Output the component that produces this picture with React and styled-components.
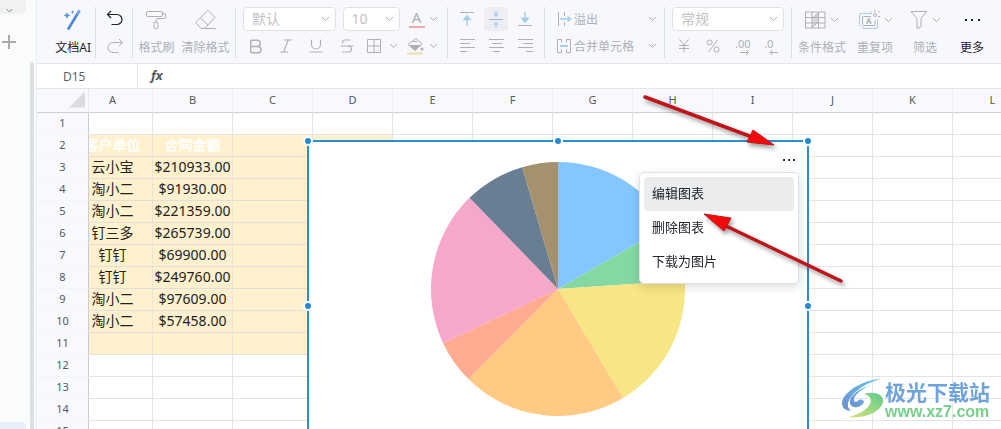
import React, { useLayoutEffect, useRef } from "react";
import styled, { createGlobalStyle, css } from "styled-components";
import { Bold, Italic, Strikethrough, Underline } from "lucide-react";

const GlobalStyle = createGlobalStyle`
    * {
        box-sizing: border-box;
    }

    body {
        margin: 0;
        overflow: hidden;
        background: #fff;
        color: #1f2329;
        font-family: "Noto Sans", "Noto Sans CJK SC", sans-serif;
        font-size: 12px;
    }

    button, input, select {
        margin: 0;
        padding: 0;
        border: 0;
        background: none;
        color: inherit;
        font: inherit;
    }
`;

const Page = styled.div`
    position: relative;
    display: flex;
    height: 100vh;
    overflow: hidden;
`;

// ---------- left rail ----------
const Rail = styled.aside`
    display: flex;
    flex: none;
    width: 37px;
    background: #fafcfb;
    border-right: 1px solid #e9ebf2;
`;

const RailTabs = styled.div`
    display: flex;
    flex: none;
    flex-direction: column;
    justify-content: space-between;
    width: 30px;
`;

const RailTop = styled.div`
    width: 26px;
    height: 14px;
    padding-left: 6px;
    border-radius: 0 0 6px 0;
    background: #f0f2f2;
    color: #8f9294;
`;

const RailAdd = styled.button`
    display: flex;
    width: 18px;
    height: 16px;
    margin-top: 20px;
    color: #a9abac;
`;

const RailActive = styled.div`
    width: 26px;
    height: 7px;
    border-radius: 0 6px 0 0;
    background: #e6eefa;
`;

const RailThumb = styled.div`
    width: 4px;
    margin-top: 62px;
    border-radius: 2px 2px 0 0;
    background: #dcdfe3;
`;

const Main = styled.main`
    display: flex;
    flex: 1;
    flex-direction: column;
    min-width: 0;
`;

// ---------- toolbar ----------
const Toolbar = styled.header`
    display: flex;
    flex: none;
    padding: 7px 0 5px;
    background: #f7f8fe;
    border-bottom: 1px solid #e4e6eb;
    color: #aeb0b5;
    white-space: nowrap;
`;

const Group = styled.div`
    display: flex;
    flex: none;
    flex-direction: ${(props) => (props.$column ? "column" : "row")};
    justify-content: ${(props) => (props.$column ? "space-between" : props.$align || "center")};
    gap: ${(props) => props.$gap || 0}px;
    width: ${(props) => props.$width}px;
    height: 51px;
    padding: 0 ${(props) => (props.$column ? 7 : 4)}px;
    border-right: 1px solid ${(props) => (props.$last ? "transparent" : "#dcdee5")};
`;

const BigButton = styled.button`
    display: flex;
    flex: none;
    flex-direction: column;
    align-items: center;
    justify-content: space-between;
    width: ${(props) => (props.$width ? `${props.$width}px` : "auto")};
    height: 50px;
    padding-top: 1px;
    color: ${(props) => (props.$dark ? "#1f2329" : "inherit")};
    line-height: 18px;
`;

const BigIcon = styled.span`
    display: flex;
    align-items: center;
    gap: 4px;
    height: 24px;
`;

const Row = styled.div`
    display: flex;
    align-items: center;
    justify-content: space-between;
    height: 24px;
`;

const IconButton = styled.button`
    display: flex;
    align-items: center;
    justify-content: center;
    gap: ${(props) => props.$gap || 0}px;
    width: ${(props) => props.$width || 24}px;
    height: 24px;
    border-radius: 4px;
    background: ${(props) => (props.$active ? "#eceef4" : "transparent")};
    color: ${(props) => (props.$dark ? "#1f2329" : "inherit")};
`;

const TextButton = styled.button`
    display: flex;
    align-items: center;
    gap: 2px;
    width: 100%;
    height: 24px;
    padding-left: 4px;
    text-align: left;

    & > span {
        flex: 1;
    }
`;

const FontColor = styled.span`
    display: block;
    width: 16px;
    height: 17px;
    border-bottom: 2px solid #efa9b1;
    font-size: 15px;
    line-height: 13px;
`;

const SelectBox = styled.label`
    display: grid;
    align-items: center;
    width: ${(props) => props.$width}px;
    height: 24px;
    border: 1px solid #dfe1e6;
    border-radius: 4px;
    background: #fff;

    & > * {
        grid-area: 1 / 1;
    }

    & > svg {
        justify-self: end;
        margin-right: 5px;
        pointer-events: none;
    }
`;

const Select = styled.select`
    appearance: none;
    width: 100%;
    padding-left: 8px;
    color: #c2c3c5;
    font-size: 14px;
    line-height: 20px;
`;

// ---------- formula bar ----------
const FormulaBar = styled.div`
    display: flex;
    flex: none;
    height: 25px;
    border-bottom: 1px solid #e4e6e9;
    background: #fff;
`;

const NameBox = styled.input`
    width: 101px;
    padding-left: 26px;
    border-right: 1px solid #e4e6e9;
    color: #5c5f66;
    font-size: 12px;
    outline: none;
`;

const FormulaLabel = styled.label`
    padding: 0 13px;
    color: #55585c;
    font-size: 13px;
    font-style: italic;
    font-weight: 700;
    line-height: 23px;
`;

const FormulaInput = styled.input`
    flex: 1;
    min-width: 0;
    outline: none;
`;

// ---------- sheet ----------
const Sheet = styled.div`
    flex: 1;
    min-height: 0;
    overflow: hidden;
`;

const Canvas = styled.div`
    position: relative;
    width: max-content;
`;

const Table = styled.table`
    table-layout: fixed;
    width: ${(props) => props.$width}px;
    border-collapse: separate;
    border-spacing: 0;
`;

const headCell = css`
    padding: 0 0 2px;
    background: #f8f9fc;
    color: #55585e;
    font-size: 11px;
    font-weight: 400;
    line-height: 19px;
`;

const ColHead = styled.th`
    ${headCell}
    height: 24px;
    border-right: 1px solid #f0f1f5;
    border-bottom: 1px solid #cfd1d5;
`;

const RowHead = styled.th`
    ${headCell}
    position: sticky;
    left: 0;
    z-index: 1;
    height: 22px;
    border-right: 1px solid #cbcdd1;
    border-bottom: 1px solid #f3f4f8;
`;

const Corner = styled(RowHead)`
    height: 24px;
    border-right-color: #e8eaee;
    border-bottom-color: #cfd1d5;
`;

const CornerMark = styled.div`
    width: 16px;
    height: 16px;
    margin: 0 3px 0 auto;
    background: #dbdcde;
    clip-path: polygon(100% 0, 100% 100%, 0 100%);
`;

const Cell = styled.td`
    height: 22px;
    padding: 0 0 2px;
    border-right: 1px solid ${(props) => (props.$filled ? "#e9e4d6" : "#e3e4e7")};
    border-bottom: 1px solid ${(props) => (props.$filled ? "#e2dfda" : "#e3e4e7")};
    background: ${(props) => (props.$filled ? "#fff1cd" : "#fff")};
    color: ${(props) => (props.$title ? "#fff" : "#222")};
    font-size: 14px;
    font-weight: ${(props) => (props.$title ? 700 : 400)};
    line-height: 19px;
    text-align: center;
    white-space: nowrap;
`;

// ---------- chart ----------
const ChartFrame = styled.section`
    position: absolute;
    top: 51px;
    left: 286px;
    z-index: 2;
    width: 502px;
    height: 332px;
    border: 2px solid #2b8fd6;
    background: #fff;
`;

const Handle = styled.span`
    position: absolute;
    top: ${(props) => props.$y};
    left: ${(props) => props.$x};
    width: 10px;
    height: 10px;
    margin: -5px;
    border: 2px solid #fff;
    border-radius: 50%;
    background: #2489d4;
`;

const Pie = styled.svg`
    display: block;
    margin: 20px auto 0;
`;

const MoreButton = styled.button`
    position: absolute;
    top: 8px;
    right: 8px;
    display: flex;
    align-items: center;
    justify-content: center;
    width: 20px;
    height: 20px;
    color: #333;
`;

const Menu = styled.div`
    position: absolute;
    top: 30px;
    right: 8px;
    width: 160px;
    padding: 4px;
    border: 1px solid #e0e1e4;
    border-radius: 5px;
    background: #fff;
    box-shadow: 0 3px 10px rgba(0, 0, 0, 0.14);
`;

const MenuItem = styled.button`
    display: block;
    width: 100%;
    height: 34px;
    padding: 0 8px 3px;
    border-radius: 4px;
    background: ${(props) => (props.$active ? "#ebecee" : "transparent")};
    color: #22262c;
    font-size: 13px;
    text-align: left;
`;

// ---------- things over the page ----------
const Arrows = styled.svg`
    position: absolute;
    top: 0;
    left: 0;
    z-index: 3;
    pointer-events: none;
    filter: drop-shadow(2px 3px 2px rgba(0, 0, 0, 0.4));
`;

const Brand = styled.div`
    position: absolute;
    right: 11px;
    bottom: 7px;
    z-index: 3;
    display: flex;
    align-items: center;
`;

const BrandText = styled.div`
    display: flex;
    flex-direction: column;
    color: #6fa3dc;
    font-family: "Noto Sans CJK SC", sans-serif;
    font-size: 21px;
    font-weight: 700;
    line-height: 26px;
`;

const BrandLink = styled.a`
    color: #78cf8c;
    font-family: "Liberation Sans", sans-serif;
    font-size: 16px;
    font-weight: 700;
    line-height: 16px;
    text-decoration: none;
`;

const columns = ["A", "B", "C", "D", "E", "F", "G", "H", "I", "J", "K", "L", "M"];

const records = [
    { name: "云小宝", amount: 210933, color: "#84c6ff" },
    { name: "淘小二", amount: 91930, color: "#84d9a3" },
    { name: "淘小二", amount: 221359, color: "#f8e584" },
    { name: "钉三多", amount: 265739, color: "#ffca84" },
    { name: "钉钉", amount: 69900, color: "#ffab91" },
    { name: "钉钉", amount: 249760, color: "#f5a8ca" },
    { name: "淘小二", amount: 97609, color: "#697e93" },
    { name: "淘小二", amount: 57458, color: "#a3926d" },
];

// Row 2 holds the titles, the records start at row 3
function cellText(row, col) {
    if (row === 2) {
        return { A: "客户单位", B: "合同金额" }[col];
    }
    const record = records[row - 3];
    if (!record) {
        return null;
    }
    return { A: record.name, B: `$${record.amount.toFixed(2)}` }[col];
}

function Icon({ width = 18, height = 18, children, ...rest }) {
    return (
        <svg
            width={width}
            height={height}
            viewBox={`0 0 ${width} ${height}`}
            fill="none"
            stroke="currentColor"
            aria-hidden="true"
            {...rest}
        >
            {children}
        </svg>
    );
}

function Chevron() {
    return (
        <Icon width={9} height={6}>
            <path d="M1 1l3.5 3.5L8 1" />
        </Icon>
    );
}

function Dots({ size = 15 }) {
    const mid = Math.floor(size / 2);
    return (
        <Icon width={size} height={4} fill="currentColor" stroke="none">
            <rect x="0" y="1" width="2" height="2" />
            <rect x={mid - 1} y="1" width="2" height="2" />
            <rect x={size - 2} y="1" width="2" height="2" />
        </Icon>
    );
}

function Dropdown({ label, width, value }) {
    return (
        <SelectBox $width={width}>
            <Select aria-label={label} defaultValue={value}>
                <option>{value}</option>
            </Select>
            <Chevron />
        </SelectBox>
    );
}

function AlignIcon({ kind }) {
    const short = { left: [0, 10], center: [3, 13], right: [5, 15] }[kind];
    const tiny = { left: [0, 7], center: [4, 11], right: [8, 15] }[kind];
    return (
        <Icon width={15} height={14}>
            <path
                d={`M0 .5H15M${short[0]} 4.5H${short[1]}M0 8.5H15M${tiny[0]} 12.5H${tiny[1]}`}
            />
        </Icon>
    );
}

function EditToolbar() {
    return (
        <Toolbar>
            <Group $width={59} $align="flex-end">
                <BigButton $dark>
                    <BigIcon>
                        <Icon width={20} height={22}>
                            <path d="M16.5 1.5L5 20.5" stroke="#4f86d9" strokeWidth="2.6" />
                            <path d="M16.5 1.5L14 5.6" stroke="#7aa5e8" strokeWidth="2.6" />
                            <path
                                d="M4 3l1 2.5 2.5 1L5 7.5 4 10 3 7.5.5 6.500 3 5.500zM9.500 1l.6 1.400 1.400.6-1.400.6-.6 1.400-.6-1.400L7.500 3l1.400-.6z"
                                fill="#5c8fdd"
                                stroke="none"
                            />
                        </Icon>
                    </BigIcon>
                    文档AI
                </BigButton>
            </Group>

            <Group $width={37} $column>
                <IconButton $dark aria-label="撤销">
                    <Icon width={18} height={18}>
                        <path d="M5 1L1.5 4.5 5 8M1.5 4.5H11a5 5 0 0 1 0 10H5.5" strokeWidth="1.2" />
                    </Icon>
                </IconButton>
                <IconButton aria-label="重做">
                    <Icon width={18} height={16}>
                        <path d="M13 1l3.5 3.5L13 8M16.5 4.5H7a5 5 0 0 0 0 10h5.5" />
                    </Icon>
                </IconButton>
            </Group>

            <Group $width={103} $gap={7}>
                <BigButton>
                    <BigIcon>
                        <Icon width={22} height={20}>
                            <rect x="1.5" y="1.5" width="16" height="5" rx="1.5" />
                            <path d="M17.5 3.5H19A1.5 1.5 0 0 1 20.5 5v2A1.5 1.5 0 0 1 19 8.500h-6a2 2 0 0 0-2 2V12" />
                            <rect x="9" y="12" width="4" height="7" rx="2" />
                        </Icon>
                    </BigIcon>
                    格式刷
                </BigButton>
                <BigButton>
                    <BigIcon>
                        <Icon width={22} height={20}>
                            <path d="M13.5.8l6.500 6.500-10 11H6L1.300 13.200a1 1 0 0 1 0-1.400L12.500.8a.7.7 0 0 1 1 0zM5.500 8l7.500 7M10 18.500h11" />
                        </Icon>
                    </BigIcon>
                    清除格式
                </BigButton>
            </Group>

            <Group $width={212} $column>
                <Row>
                    <Dropdown label="字体" width={93} value="默认" />
                    <Dropdown label="字号" width={57} value="10" />
                    <IconButton $width={34} $gap={4} aria-label="字体颜色">
                        <FontColor>A</FontColor>
                        <Chevron />
                    </IconButton>
                </Row>
                <Row>
                    <IconButton aria-label="加粗">
                        <Bold size={19} strokeWidth={1.8} />
                    </IconButton>
                    <IconButton aria-label="斜体">
                        <Italic size={18} strokeWidth={1.5} />
                    </IconButton>
                    <IconButton aria-label="下划线">
                        <Underline size={18} strokeWidth={1.5} />
                    </IconButton>
                    <IconButton aria-label="删除线">
                        <Strikethrough size={18} strokeWidth={1.5} />
                    </IconButton>
                    <IconButton $width={34} $gap={8} aria-label="边框">
                        <Icon width={14} height={14}>
                            <path d="M.5.5h13v13H.5zM.5 7h13M7 .5v13" />
                        </Icon>
                        <Chevron />
                    </IconButton>
                    <IconButton $width={34} $gap={5} aria-label="填充颜色">
                        <Icon width={17} height={18}>
                            <path d="M1 7.5L9 1.5 15 7l-7 6.500zM5 4.500h5" />
                            <path d="M2 8h12l-6 5.500z" fill="currentColor" stroke="none" />
                            <circle cx="15" cy="12" r="1.5" fill="currentColor" stroke="none" />
                            <path d="M0 16.5h16" stroke="#ecdfa4" strokeWidth="2" />
                        </Icon>
                        <Chevron />
                    </IconButton>
                </Row>
            </Group>

            <Group $width={97} $column>
                <Row>
                    <IconButton aria-label="顶端对齐">
                        <Icon width={14} height={16}>
                            <path d="M0 1.5h14" />
                            <path d="M7 15V6M4 8.5L7 5l3 3.5z" stroke="#a5cdec" fill="#a5cdec" strokeWidth="1.5" />
                        </Icon>
                    </IconButton>
                    <IconButton $active aria-label="垂直居中">
                        <Icon width={14} height={18}>
                            <path d="M0 9.5h14" />
                            <path
                                d="M7 0v4M5 4l2 2.5L9 4zM7 18v-4M5 14.500l2-2.500 2 2.500z"
                                stroke="#a5cdec"
                                fill="#a5cdec"
                            />
                        </Icon>
                    </IconButton>
                    <IconButton aria-label="底端对齐">
                        <Icon width={14} height={16}>
                            <path d="M0 14.5h14" />
                            <path d="M7 1v9M4 7.5L7 11l3-3.5z" stroke="#a5cdec" fill="#a5cdec" strokeWidth="1.5" />
                        </Icon>
                    </IconButton>
                </Row>
                <Row>
                    <IconButton aria-label="左对齐">
                        <AlignIcon kind="left" />
                    </IconButton>
                    <IconButton aria-label="水平居中">
                        <AlignIcon kind="center" />
                    </IconButton>
                    <IconButton aria-label="右对齐">
                        <AlignIcon kind="right" />
                    </IconButton>
                </Row>
            </Group>

            <Group $width={120} $column>
                <TextButton>
                    <Icon width={16} height={14}>
                        <path d="M2.5 0v14M8.5 0v4M8.5 10v4" />
                        <path d="M4 7h10M11.5 4.5l3 2.5-3 2.5" stroke="#a5cdec" strokeWidth="1.5" />
                    </Icon>
                    <span>溢出</span>
                    <Chevron />
                </TextButton>
                <TextButton>
                    <Icon width={16} height={14}>
                        <path d="M5.5 3.5v-3h-4v13h4v-3M10.5 3.5v-3h4v13h-4v-3" />
                        <path d="M4 7h8" stroke="#a5cdec" strokeWidth="2" />
                    </Icon>
                    <span>合并单元格</span>
                    <Chevron />
                </TextButton>
            </Group>

            <Group $width={127} $column>
                <Row>
                    <Dropdown label="数字格式" width={112} value="常规" />
                </Row>
                <Row>
                    <IconButton aria-label="货币">
                        <Icon width={12} height={14}>
                            <path d="M1.5.5L6 6l4.500-5.500M6 6v7.500M1 6.500h10M1 9.500h10" />
                        </Icon>
                    </IconButton>
                    <IconButton aria-label="百分比">
                        <Icon width={14} height={14}>
                            <circle cx="3.5" cy="3.5" r="2.5" />
                            <circle cx="10.5" cy="10.5" r="2.5" />
                            <path d="M11.5 1l-9 12" />
                        </Icon>
                    </IconButton>
                    <IconButton aria-label="增加小数位">
                        <Icon width={22} height={20}>
                            <text x="3" y="12" fontSize="11" fill="currentColor" stroke="none">.00</text>
                            <path d="M8 16.5h8M14 14l2.5 2.5L14 19" />
                        </Icon>
                    </IconButton>
                    <IconButton aria-label="减少小数位">
                        <Icon width={22} height={20}>
                            <text x="3" y="12" fontSize="11" fill="currentColor" stroke="none">.0</text>
                            <path d="M9 16.5h8M11.5 14L9 16.500l2.500 2.500" />
                        </Icon>
                    </IconButton>
                </Row>
            </Group>

            <Group $width={209} $align="flex-start" $last>
                <BigButton $width={52}>
                    <BigIcon>
                        <Icon width={21} height={18}>
                            <path d="M7.5 6.5L14 1v9.500L7.500 17z" fill="#d8dade" stroke="none" />
                            <path d="M.5 1H20v16H.5zM7 1v16M13.5 1v16M.5 6.500H20M.5 12H20M7 8l6.500-6.500M7 16.500l6.500-6" />
                        </Icon>
                        <Chevron />
                    </BigIcon>
                    条件格式
                </BigButton>
                <BigButton $width={54}>
                    <BigIcon>
                        <Icon width={22} height={20}>
                            <path d="M14 3.5H3A1.5 1.5 0 0 0 1.500 5v9.500A1.500 1.500 0 0 0 3 16" stroke="#a5cdec" />
                            <path d="M19.5 9v8a1.5 1.5 0 0 1-1.500 1.500H6A1.500 1.500 0 0 1 4.500 17" stroke="#a5cdec" />
                            <path d="M13 6.500H5.500a1 1 0 0 0-1 1v7a1 1 0 0 0 1 1H16a1 1 0 0 0 1-1V10" />
                            <text x="8" y="14" fontSize="8" fontWeight="700" fill="currentColor" stroke="none">A</text>
                            <circle cx="17" cy="5" r="1.5" />
                            <path d="M17 0v2M20 3l1.500-1.500M20 6.500h2M14 2.500l-1-1" />
                        </Icon>
                        <Chevron />
                    </BigIcon>
                    重复项
                </BigButton>
                <BigButton $width={46}>
                    <BigIcon>
                        <Icon width={18} height={20}>
                            <path d="M1 1.500h15.500L11 8.500v8l-4 2v-10z" strokeLinejoin="round" />
                        </Icon>
                        <Chevron />
                    </BigIcon>
                    筛选
                </BigButton>
                <BigButton $width={48} $dark>
                    <BigIcon>
                        <Dots />
                    </BigIcon>
                    更多
                </BigButton>
            </Group>
        </Toolbar>
    );
}

function PieChart({ radius = 127 }) {
    const total = records.reduce((sum, record) => sum + record.amount, 0);
    let sum = 0;
    const point = (value) => {
        const angle = (value / total) * Math.PI * 2;
        return `${radius + radius * Math.sin(angle)} ${radius - radius * Math.cos(angle)}`;
    };

    return (
        <Pie width={radius * 2} height={radius * 2} role="img" aria-label="合同金额">
            {records.map((record, index) => {
                const start = point(sum);
                sum += record.amount;
                return (
                    <path
                        key={index}
                        d={`M${radius} ${radius}L${start}A${radius} ${radius} 0 0 1 ${point(sum)}Z`}
                        fill={record.color}
                    />
                );
            })}
        </Pie>
    );
}

function Chart() {
    return (
        <ChartFrame>
            <PieChart />
            <MoreButton aria-label="图表操作">
                <Dots size={12} />
            </MoreButton>
            <Menu>
                <MenuItem $active>编辑图表</MenuItem>
                <MenuItem>删除图表</MenuItem>
                <MenuItem>下载为图片</MenuItem>
            </Menu>
            <Handle $x="-1px" $y="-1px" />
            <Handle $x="50%" $y="-1px" />
            <Handle $x="calc(100% + 1px)" $y="-1px" />
            <Handle $x="-1px" $y="50%" />
            <Handle $x="calc(100% + 1px)" $y="50%" />
        </ChartFrame>
    );
}

function Spreadsheet() {
    const sheetRef = useRef(null);

    // the sheet is scrolled a little to the right, under the row numbers
    useLayoutEffect(() => {
        sheetRef.current.scrollLeft = 16;
    }, []);

    return (
        <Sheet ref={sheetRef}>
            <Canvas>
                <Table $width={52 + columns.length * 80}>
                    <colgroup>
                        <col style={{ width: 52 }} />
                        {columns.map((col) => (
                            <col key={col} />
                        ))}
                    </colgroup>
                    <thead>
                        <tr>
                            <Corner>
                                <CornerMark />
                            </Corner>
                            {columns.map((col) => (
                                <ColHead key={col} scope="col">{col}</ColHead>
                            ))}
                        </tr>
                    </thead>
                    <tbody>
                        {Array.from({ length: 18 }, (_, i) => i + 1).map((row) => (
                            <tr key={row}>
                                <RowHead scope="row">{row}</RowHead>
                                {columns.map((col, index) => (
                                    <Cell
                                        key={col}
                                        $title={row === 2}
                                        $filled={row >= 2 && row <= 11 && index < 4}
                                    >
                                        {cellText(row, col)}
                                    </Cell>
                                ))}
                            </tr>
                        ))}
                    </tbody>
                </Table>
                <Chart />
            </Canvas>
        </Sheet>
    );
}

function PointerArrows() {
    return (
        <Arrows width="860" height="300" aria-hidden="true">
            <path d="M645 97L752 137M841 281L726 226" stroke="#c01418" strokeWidth="3.5" strokeLinecap="round" />
            <path d="M774 145L747 142 753 130zM704 214L731 218 724 231z" fill="#f40a0a" stroke="#c01418" />
        </Arrows>
    );
}

function BrandMark() {
    return (
        <Brand>
            <svg width="45" height="46" viewBox="12 14 135 138" aria-hidden="true">
                <defs>
                    <linearGradient id="brandBlue" x1="1" y1="0" x2="0" y2="1">
                        <stop offset="0" stopColor="#6cc5ee" />
                        <stop offset="1" stopColor="#6a8fce" />
                    </linearGradient>
                    <linearGradient id="brandGreen" x1="1" y1="0" x2="0" y2="1">
                        <stop offset="0" stopColor="#5fc98c" />
                        <stop offset="1" stopColor="#dde57a" />
                    </linearGradient>
                </defs>
                <path d="M136 22C86 24 20 60 18 95c0 16 12 24 27 23-14-10-12-28 5-48 20-22 50-38 86-48z" fill="url(#brandBlue)" />
                <path d="M104 42C66 52 38 78 42 96c4 18 34 14 42-4-2-10-14-10-20-2-6 4-12 0-10-8 6-16 26-30 50-40z" fill="url(#brandBlue)" />
                <path d="M84 68c30-10 64 2 56 28-10 28-52 46-108 42 34-6 66-24 72-46 2-14-6-20-20-24z" fill="url(#brandGreen)" />
            </svg>
            <BrandText>
                极光下载站
                <BrandLink href="#">www.xz7.com</BrandLink>
            </BrandText>
        </Brand>
    );
}

function App() {
    return (
        <>
            <GlobalStyle />
            <Page>
                <Rail>
                    <RailTabs>
                        <div>
                            <RailTop>
                                <Icon width={8} height={4}>
                                    <path d="M1 0c0 3 5 3 5 0" />
                                </Icon>
                            </RailTop>
                            <RailAdd aria-label="添加">
                                <Icon width={18} height={16}>
                                    <path d="M2 8h14M9 1v14" strokeWidth="2" />
                                </Icon>
                            </RailAdd>
                        </div>
                        <RailActive />
                    </RailTabs>
                    <RailThumb />
                </Rail>
                <Main>
                    <EditToolbar />
                    <FormulaBar>
                        <NameBox aria-label="单元格" defaultValue="D15" />
                        <FormulaLabel htmlFor="formula">fx</FormulaLabel>
                        <FormulaInput id="formula" />
                    </FormulaBar>
                    <Spreadsheet />
                </Main>
                <PointerArrows />
                <BrandMark />
            </Page>
        </>
    );
}

export default App;
